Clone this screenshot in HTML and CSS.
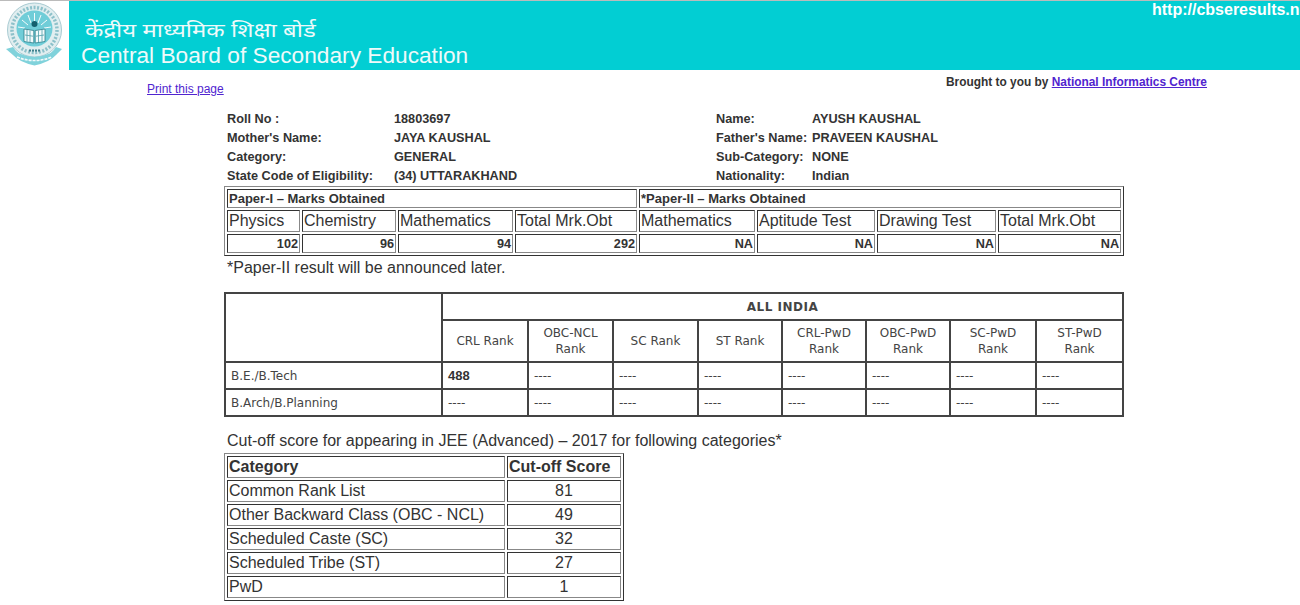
FILE: index.html
```html
<!DOCTYPE html>
<html lang="en">
<head>
<meta charset="utf-8">
<title>CBSE Results</title>
<link rel="stylesheet" href="styles.css">
</head>
<body>
<header class="top">
  <div class="logo">
    <svg width="62" height="64" viewBox="0 0 62 64" aria-hidden="true">
      <circle cx="30.500" cy="28" r="27" fill="#e1eef0" stroke="#a9cbd2" stroke-width="1"/>
      <path d="M2 47 L9 45 Q13 51 17 52 Q30.500 58 44 52 Q48 51 52 45 L58 47 L52 53 Q46 60 30.500 63.500 Q15 60 9 53 Z" fill="#80d2db"/>
      <circle cx="30.500" cy="28" r="22.500" fill="none" stroke="#5fa9b5" stroke-width="3.500" stroke-dasharray="2 1.600" opacity=".65"/>
      <circle cx="30.500" cy="26.500" r="18" fill="#70cdd8"/>
      <path d="M30.500 11V20M24 13L27 21M37 13L34 21M18 18L24 23M43 18L37 23M14 25L21 26M47 25L40 26" stroke="#f4fbfc" stroke-width="1"/>
      <circle cx="30.500" cy="22" r="3" fill="#14606e"/>
      <path d="M20 27 L29.800 28.500 V41 L20 39.500 Z M41 27 L31.200 28.500 V41 L41 39.500 Z" fill="#f2fafb" stroke="#2b7f8c" stroke-width=".8"/>
      <path d="M23 28V39.500M26 28.500V40M34.500 28.500V40M38 28V39.500M21 33L29 34.200M40 33L32 34.200" stroke="#4f9eaa" stroke-width=".8"/>
      <path d="M25 48.500H36" stroke="#3f7f8b" stroke-width="2" stroke-dasharray="2 1"/>
      <path d="M13 55Q30.500 62 48 55" fill="none" stroke="#f3fafb" stroke-width="1.600" stroke-dasharray="3 1"/>
    </svg>
  </div>
  <div class="banner">
    <div class="hindi">केंद्रीय माध्यमिक शिक्षा बोर्ड</div>
    <div class="english">Central Board of Secondary Education</div>
    <div class="site">http://cbseresults.nic.in</div>
  </div>
</header>

<div class="links">
  <a class="print" href="#">Print this page</a>
  <div class="credit">Brought to you by <a href="#">National Informatics Centre</a></div>
</div>

<main class="content">
  <div class="info">
    <div>Roll No :</div><div>18803697</div><div>Name:</div><div>AYUSH KAUSHAL</div>
    <div>Mother's Name:</div><div>JAYA KAUSHAL</div><div>Father's Name:</div><div>PRAVEEN KAUSHAL</div>
    <div>Category:</div><div>GENERAL</div><div>Sub-Category:</div><div>NONE</div>
    <div>State Code of Eligibility:</div><div>(34) UTTARAKHAND</div><div>Nationality:</div><div>Indian</div>
  </div>

  <table class="old marks">
    <colgroup>
      <col class="m1"><col class="m2"><col class="m3"><col class="m4">
      <col class="m5"><col class="m6"><col class="m7"><col class="m8">
    </colgroup>
    <tr class="mh"><th colspan="4">Paper-I – Marks Obtained</th><th colspan="4">*Paper-II – Marks Obtained</th></tr>
    <tr class="ml"><td>Physics</td><td>Chemistry</td><td>Mathematics</td><td>Total Mrk.Obt</td><td>Mathematics</td><td>Aptitude Test</td><td>Drawing Test</td><td>Total Mrk.Obt</td></tr>
    <tr class="mv"><td>102</td><td>96</td><td>94</td><td>292</td><td>NA</td><td>NA</td><td>NA</td><td>NA</td></tr>
  </table>
  <p class="note">*Paper-II result will be announced later.</p>

  <table class="rank">
    <colgroup>
      <col class="r0"><col class="r1"><col class="r2"><col class="r3"><col class="r4">
      <col class="r5"><col class="r6"><col class="r7"><col class="r8">
    </colgroup>
    <tr class="ra"><td rowspan="2"></td><th colspan="8">ALL INDIA</th></tr>
    <tr class="rb"><td>CRL Rank</td><td>OBC-NCL<br>Rank</td><td>SC Rank</td><td>ST Rank</td><td>CRL-PwD<br>Rank</td><td>OBC-PwD<br>Rank</td><td>SC-PwD<br>Rank</td><td>ST-PwD<br>Rank</td></tr>
    <tr class="rc"><td>B.E./B.Tech</td><td><b>488</b></td><td>----</td><td>----</td><td>----</td><td>----</td><td>----</td><td>----</td><td>----</td></tr>
    <tr class="rc"><td>B.Arch/B.Planning</td><td>----</td><td>----</td><td>----</td><td>----</td><td>----</td><td>----</td><td>----</td><td>----</td></tr>
  </table>

  <p class="cut-title">Cut-off score for appearing in JEE (Advanced) – 2017 for following categories*</p>
  <table class="old cut">
    <colgroup><col class="c1"><col class="c2"></colgroup>
    <tr><th>Category</th><th>Cut-off Score</th></tr>
    <tr><td>Common Rank List</td><td>81</td></tr>
    <tr><td>Other Backward Class (OBC - NCL)</td><td>49</td></tr>
    <tr><td>Scheduled Caste (SC)</td><td>32</td></tr>
    <tr><td>Scheduled Tribe (ST)</td><td>27</td></tr>
    <tr><td>PwD</td><td>1</td></tr>
  </table>
</main>
</body>
</html>
```
FILE: styles.css
```css
* { box-sizing: border-box; }
html, body { margin: 0; padding: 0; background: #fff; overflow: hidden; }
body { font-family: "Liberation Sans", Arial, sans-serif; color: #333; height: 605px; }

.top { display: flex; height: 70px; border-top: 1px solid #bbb; }
.logo { width: 69px; padding: 1px 0 0 4px; flex: none; }
.banner { flex: 1; background: #02ced3; color: #eefafa; position: relative; overflow: hidden; white-space: nowrap; padding: 18px 0 0 12px; }
.hindi { width: 190px; margin-left: 4px; font-family: "Noto Sans", "Noto Sans CJK SC", "Liberation Sans", sans-serif; font-size: 19px; line-height: 22px; transform: scaleX(1.26); transform-origin: left center; }
.english { font-size: 22.700px; line-height: 22px; margin-top: 3px; }
.site { position: absolute; left: 1083px; top: 0; font-size: 16px; font-weight: bold; color: #fff; line-height: 18px; }

.links { display: flex; justify-content: space-between; height: 30px; padding: 5px 93px 0 147px; font-size: 12px; }
.links a { color: #5024cf; }
.print { margin-top: 7px; line-height: 14px; }
.credit { font-weight: bold; font-size: 11.900px; line-height: 14px; }

.content { width: 900px; margin-left: 224px; padding-top: 10px; }

.info { display: grid; grid-template-columns: 167px 322px 96px 1fr; grid-auto-rows: 19px; padding-left: 3px; font-size: 12.700px; font-weight: bold; line-height: 19px; }

table { table-layout: fixed; width: 900px; }
.old { border-collapse: separate; border-spacing: 2px; border: 1px solid; border-color: #888 #333 #333 #888; }
.old th, .old td { border: 1px solid; border-color: #333 #888 #888 #333; padding: 0 1px; overflow: hidden; white-space: nowrap; }

.marks { height: 70px; }
.m1 { width: 73px; } .m2 { width: 94px; } .m3 { width: 115px; } .m4 { width: 122px; }
.m5 { width: 116px; } .m6 { width: 118px; } .m7 { width: 119px; } .m8 { width: 123px; }
.mh th { font-size: 13px; text-align: left; height: 19px; }
.ml td { font-size: 16px; height: 22px; line-height: 18px; }
.mv td { font-size: 12.700px; font-weight: bold; text-align: right; height: 19px; }

.note { margin: 3px 0 0 3px; font-size: 16px; line-height: 18px; height: 33px; }

.rank { width: 898px; border-collapse: collapse; border: 2px solid #444; font-family: "DejaVu Sans", Verdana, sans-serif; font-size: 12px; color: #444; }
.rank td, .rank th { border: 2px solid #444; padding: 0 5px; }
.r0 { width: 217px; } .r1 { width: 86px; } .r2 { width: 85px; } .r3 { width: 85px; } .r4 { width: 84px; }
.r5 { width: 84px; } .r6 { width: 84px; } .r7 { width: 86px; } .r8 { width: 87px; }
.ra th { height: 27px; font-size: 12px; letter-spacing: .5px; text-align: center; }
.rb td { height: 42px; text-align: center; line-height: 16px; }
.rc td { height: 27px; }
.rc b { font-family: "Liberation Sans", Arial, sans-serif; font-size: 13px; color: #333; }

.cut-title { margin: 15px 0 0 3px; font-size: 16px; line-height: 18px; }
.cut { margin-top: 3px; width: 400px; height: 148px; }
.c1 { width: 278px; } .c2 { width: 114px; }
.cut th, .cut td { font-size: 16px; height: 22px; line-height: 18px; }
.cut th { text-align: left; }
.cut td + td { text-align: center; }
```
